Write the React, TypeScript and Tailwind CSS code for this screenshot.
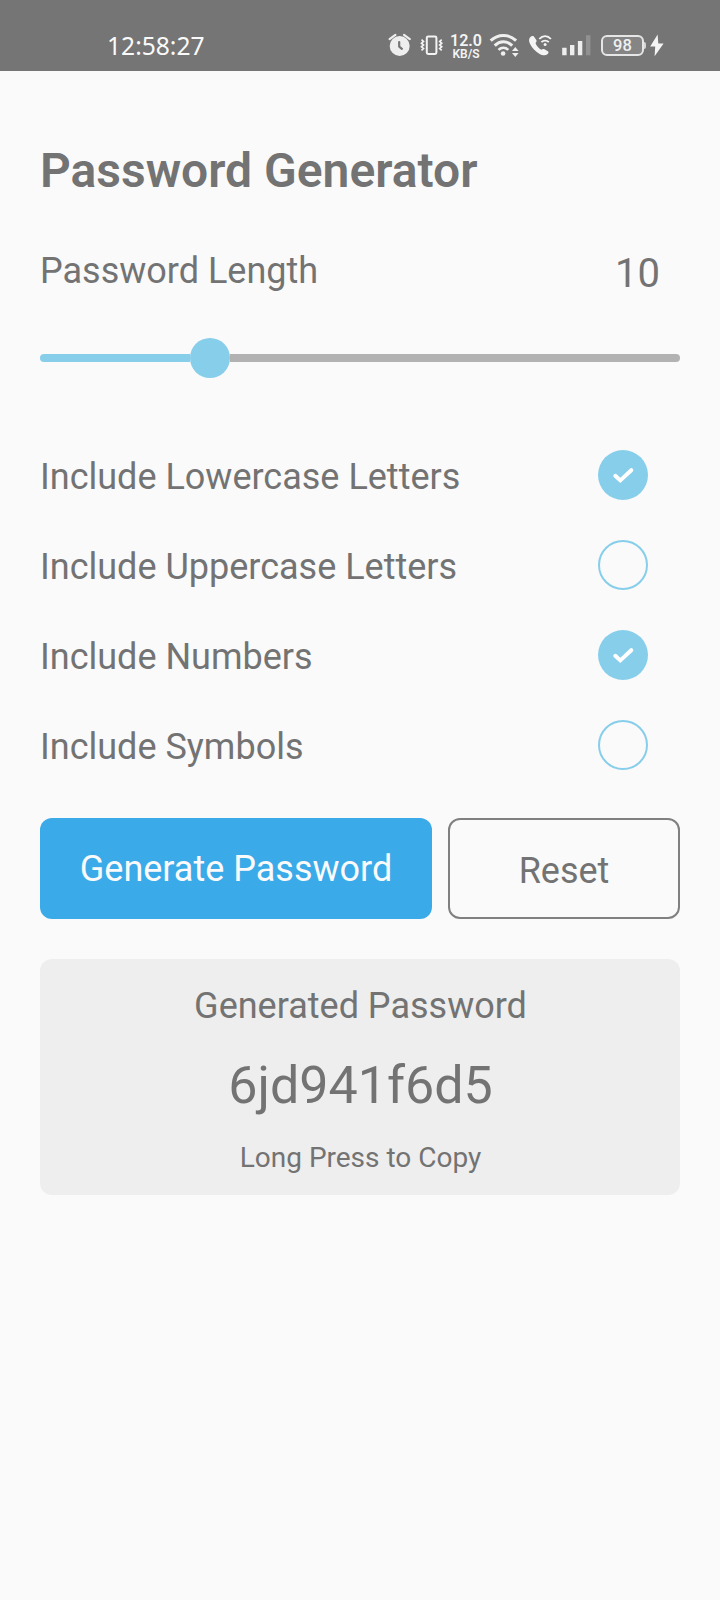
import React, { useState } from "react";

function AlarmIcon() {
  return (
    <svg width="24" height="24" viewBox="0 0 24 24" className="ml-[183px] shrink-0" fill="none">
      <circle cx="11.7" cy="13" r="10" fill="#eeeeee" />
      <path d="M1.600 6.200 7.400 1.800M21.800 6.200 16 1.800" stroke="#eeeeee" strokeWidth="2.200" strokeLinecap="round" />
      <path d="M11.2 9v4.600l2.700 2.200" stroke="#757575" strokeWidth="2.200" strokeLinecap="round" strokeLinejoin="round" />
    </svg>
  );
}

function VibrateIcon() {
  return (
    <svg width="24" height="24" viewBox="0 0 24 24" className="ml-[7px] shrink-0" fill="none" stroke="#f4f4f4">
      <rect x="7.8" y="3.4" width="9.6" height="17.6" rx="1.4" strokeWidth="2" />
      <path d="M2.500 6.600l2 1.800-2 1.800 2 1.800-2 1.800 2 1.800-2 1.800M22.700 6.600l-2 1.800 2 1.800-2 1.800 2 1.800-2 1.800 2 1.800" strokeWidth="1.7" />
    </svg>
  );
}

function WifiIcon() {
  return (
    <svg width="31" height="24" viewBox="0 0 31 24" className="ml-[7px] shrink-0" fill="none" stroke="#efefef">
      <path d="M1.700 7.700C9 .6 19.800.6 27.100 7.700" strokeWidth="3" />
      <path d="M5.700 12.600C11 7.500 17.900 7.500 23.200 12.600" strokeWidth="3" />
      <path d="M9.500 16.900C12.400 14.100 16.400 14.100 19.300 16.900" strokeWidth="2.600" />
      <circle cx="14.1" cy="20.500" r="2.300" fill="#efefef" stroke="none" />
      <path d="M26.300 14l3.300 4h-6.600zM26.300 24l3.300-4h-6.600z" fill="#efefef" stroke="none" />
    </svg>
  );
}

function CallIcon() {
  return (
    <svg width="24" height="24" viewBox="0 0 24 24" className="ml-[8px] shrink-0" fill="none">
      <path
        d="M2.200 4.300C3.300 3.100 4.900 2.500 5.900 3.500L8.300 7C8.900 8 8.500 8.800 7.500 10.100C8.300 12.800 10.600 15.400 13.300 16.800C14.500 15.900 15.400 15.600 16.500 16.200L19.900 18.200C21 19 20.600 20.300 19.400 21.300C17.500 22.900 14.500 22.500 11.200 20.700C7.300 18.500 4.200 15.300 2.100 11.100C.7 8.200.7 5.900 2.200 4.300Z"
        fill="#f4f4f4"
      />
      <path d="M11.300 6C14.600 2.200 19.600 2.200 22.900 6" stroke="#f4f4f4" strokeWidth="1.900" />
      <path d="M13.400 9.200C15.500 7 18.700 7 20.800 9.200" stroke="#f4f4f4" strokeWidth="1.800" />
      <circle cx="17.100" cy="11.500" r="1.500" fill="#f4f4f4" />
    </svg>
  );
}

function SignalIcon() {
  return (
    <svg width="30" height="24" viewBox="0 0 30 24" className="ml-[10px] shrink-0">
      <path d="M.2 14.800h4.400V22.300H.2zM8 12h4.400v10.300H8zM15.900 8h4.400v14.300h-4.400z" fill="#eeeeee" />
      <path d="M24 2.200h4.400v20.100H24z" fill="#919191" />
    </svg>
  );
}

function BoltIcon() {
  return (
    <svg width="14" height="24" viewBox="0 0 14 24" className="ml-[4px] shrink-0">
      <path d="M7.600 1.600 .2 13.400h5L4.600 23.200 13.600 10.600H8.300z" fill="#f4f4f4" />
    </svg>
  );
}

function StatusBar() {
  return (
    <header className="flex h-[71px] items-start bg-[#757575] pt-[33px] text-white">
      <time className="ml-[107px] w-[98px] shrink-0 whitespace-nowrap font-['Noto_Sans'] text-[24.6px] leading-[25px] text-[#fafafa]">
        12:58:27
      </time>
      <AlarmIcon />
      <VibrateIcon />
      <div className="ml-[7px] mt-px flex w-[32px] shrink-0 flex-col items-center font-['Roboto'] text-[#f4f4f4]">
        <span className="text-[16px] font-semibold leading-[14px]">12.0</span>
        <span className="text-[12px] font-semibold leading-[12px]">KB/S</span>
      </div>
      <WifiIcon />
      <CallIcon />
      <SignalIcon />
      <div className="ml-[9px] mt-[2px] flex h-[21px] w-[43px] shrink-0 items-center justify-center rounded-[6px] border-2 border-[#e6e6e6] bg-[#858585] pt-[2px] font-['Roboto'] text-[16.5px] font-medium leading-none text-[#f0f0f0]">
        98
      </div>
      <div className="mt-[9px] h-[7px] w-[2px] shrink-0 rounded-r bg-[#d5d5d5]" />
      <BoltIcon />
    </header>
  );
}

function Option({ label, checked, onToggle }: { label: string; checked: boolean; onToggle: () => void }) {
  return (
    <div className="flex h-[90px] items-center justify-between pr-8">
      <span className="mt-[3px] leading-[42px]">{label}</span>
      <button
        role="checkbox"
        aria-checked={checked}
        aria-label={label}
        onClick={onToggle}
        className={
          checked
            ? "flex size-[50px] items-center justify-center rounded-full bg-[#87ceeb]"
            : "flex size-[50px] items-center justify-center rounded-full border-2 border-[#87ceeb]"
        }
      >
        {checked && (
          <svg width="24" height="20" viewBox="0 0 24 20" fill="none">
            <path d="M4.300 10.800 9.300 15.400 20.300 5.200" stroke="#fff" strokeWidth="4" strokeLinecap="round" />
          </svg>
        )}
      </button>
    </div>
  );
}

const INITIAL = [
  { label: "Include Lowercase Letters", checked: true },
  { label: "Include Uppercase Letters", checked: false },
  { label: "Include Numbers", checked: true },
  { label: "Include Symbols", checked: false },
];

export default function App() {
  const [options, setOptions] = useState(INITIAL);
  const toggle = (i: number) =>
    setOptions(options.map((o, n) => (n === i ? { ...o, checked: !o.checked } : o)));

  return (
    <div className="min-h-[1600px] w-[720px] overflow-hidden bg-[#fafafa] font-['Roboto',sans-serif] text-[36px] text-[#737373]">
      <StatusBar />
      <main className="px-10 pt-[72px]">
        <h1 className="text-[48px] font-semibold leading-[56px]">Password Generator</h1>
        <div className="mt-[51px] flex h-[47px] items-start justify-between pr-5">
          <span className="leading-[42px]">Password Length</span>
          <span className="text-[40px] leading-[47px]">10</span>
        </div>
        <div className="mt-[41px] flex h-10 items-center">
          <div className="h-2 w-[150px] rounded-l-full bg-[#87ceeb]" />
          <div className="size-10 rounded-full bg-[#87ceeb]" />
          <div className="h-2 flex-1 rounded-r-full bg-[#b2b2b2]" />
        </div>
        <div className="mt-[52px]">
          {options.map((o, i) => (
            <Option key={o.label} label={o.label} checked={o.checked} onToggle={() => toggle(i)} />
          ))}
        </div>
        <div className="mt-7 flex h-[100.5px] gap-4">
          <button className="w-[392px] rounded-xl bg-[#3aaae8] pt-px leading-[42px] text-[#fafafa]">
            Generate Password
          </button>
          <button className="flex-1 rounded-xl border-2 border-[#808080] pt-[5px] leading-[42px]">Reset</button>
        </div>
        <section className="mt-10 flex h-[236.5px] flex-col items-center rounded-xl bg-[#eeeeee] pl-px pt-[26px]">
          <span className="leading-[42px]">Generated Password</span>
          <span className="mt-[28px] text-[52px] leading-[61px]">6jd941f6d5</span>
          <span className="mt-[25px] text-[28px] leading-[33px]">Long Press to Copy</span>
        </section>
      </main>
    </div>
  );
}
